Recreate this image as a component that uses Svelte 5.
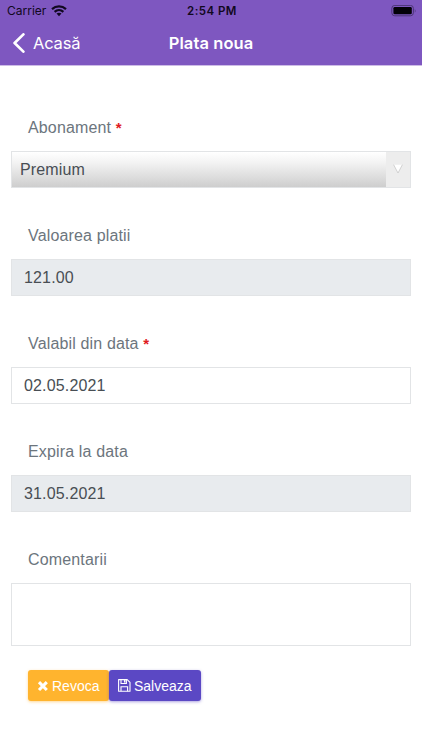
<script>
  let plan = $state('Premium');
  let startDate = $state('02.05.2021');
  let comments = $state('');
</script>

<div class="screen">
  <header>
    <div class="status">
      <div class="network">
        <span class="carrier">Carrier</span>
        <svg width="16" height="12" viewBox="0 0 16 12" aria-hidden="true">
          <path d="M1 4.1C5 .5 11 .5 15 4.1M3.6 6.8C6.2 4.6 9.8 4.6 12.4 6.8" fill="none" stroke="currentColor" stroke-width="2.2" />
          <path d="M8 11.2 5.5 8.6Q8 6.7 10.5 8.6Z" fill="currentColor" />
        </svg>
      </div>
      <span class="time">2:54 PM</span>
      <svg class="battery" width="26" height="12" viewBox="0 0 26 12" aria-hidden="true">
        <rect x="0.8" y="0.4" width="21.6" height="10.4" rx="3" fill="none" stroke="#4c3575" />
        <rect x="2.4" y="1.9" width="18.4" height="7.4" rx="1.4" fill="#030108" />
        <path d="M23.8 3.8q1.5 2 0 4z" fill="#4c3575" />
      </svg>
    </div>
    <nav>
      <button class="back" type="button">
        <svg width="13" height="20" viewBox="0 0 13 20" aria-hidden="true">
          <path d="M11.4 1.4 2.6 10l8.8 8.6" fill="none" stroke="currentColor" stroke-width="2.7" stroke-linecap="round" stroke-linejoin="round" />
        </svg>
        <span>Acasă</span>
      </button>
      <h1>Plata noua</h1>
    </nav>
  </header>

  <form>
    <div class="group">
      <label for="plan">Abonament <i>*</i></label>
      <button id="plan" class="control select" type="button">
        <span class="value">{plan}</span>
        <span class="arrow">
          <svg width="10" height="10" viewBox="0 0 10 10" aria-hidden="true">
            <path d="M.6.7h8.8L5 9z" fill="#fff" />
            <path d="M.6.7 5 9 9.4.7" fill="none" stroke="#c8c8c8" stroke-width=".8" />
          </svg>
        </span>
      </button>
    </div>
    <div class="group">
      <label for="amount">Valoarea platii</label>
      <input id="amount" class="control" value="121.00" readonly />
    </div>
    <div class="group">
      <label for="start">Valabil din data <i>*</i></label>
      <input id="start" class="control" bind:value={startDate} />
    </div>
    <div class="group">
      <label for="end">Expira la data</label>
      <input id="end" class="control" value="31.05.2021" readonly />
    </div>
    <div class="group last">
      <label for="comments">Comentarii</label>
      <textarea id="comments" class="control" bind:value={comments}></textarea>
    </div>
    <div class="actions">
      <button class="cancel" type="button">
        <svg width="12" height="12" viewBox="0 0 12 12" aria-hidden="true">
          <path d="m2 2.2 7.8 7.8m0-7.8L2 10" stroke="currentColor" stroke-width="3.1" />
        </svg>
        <span>Revoca</span>
      </button>
      <button class="save" type="button">
        <svg width="13" height="13" viewBox="0 0 13 13" fill="none" stroke="currentColor" stroke-width="1.1" aria-hidden="true">
          <path d="M.6.6h8.6l2.8 2.8v8.8H.6z" stroke-linejoin="round" />
          <path d="M3 .8v3.7h5.4V.8M3 12.2V7.7h6.6v4.5" />
          <path d="M6.7 1v2.6" stroke-width="1.5" />
        </svg>
        <span>Salveaza</span>
      </button>
    </div>
  </form>
</div>

<style>
  :global(body) {
    margin: 0;
    background: #fff;
  }
  .screen {
    width: 422px;
    height: 750px;
    overflow: hidden;
    background: #fff;
    font-family: "Liberation Sans", Arial, sans-serif;
  }
  button {
    margin: 0;
    padding: 0;
    border: 0;
    background: none;
    font: inherit;
    color: inherit;
  }
  header {
    height: 65px;
    background: #7e57c0;
    border-bottom: 1px solid #cdbce6;
    font-family: Inter, "Liberation Sans", sans-serif;
  }
  .status {
    display: grid;
    grid-template-columns: 1fr auto 1fr;
    align-items: center;
    height: 22px;
    padding: 0 5px 0 7px;
    color: #110820;
    font-size: 12px;
  }
  .network {
    display: flex;
    align-items: center;
    gap: 5px;
    line-height: 14px;
    padding-bottom: 1px;
  }
  .time {
    font-size: 11.5px;
    font-weight: 600;
    letter-spacing: 0.45px;
  }
  .battery {
    justify-self: end;
  }
  nav {
    display: grid;
    grid-template-columns: 1fr auto 1fr;
    align-items: center;
    height: 42px;
    color: #fff;
  }
  .back {
    display: flex;
    align-items: center;
    gap: 8px;
    padding-left: 12px;
    font-size: 16.5px;
    letter-spacing: -0.2px;
  }
  h1 {
    margin: 0;
    font-size: 16.5px;
    font-weight: 600;
    letter-spacing: 0.1px;
  }
  form {
    padding: 50px 11px 0;
  }
  .group {
    display: flex;
    flex-direction: column;
    height: 108px;
  }
  .group.last {
    height: 122px;
  }
  label {
    height: 35px;
    padding-left: 17px;
    line-height: 24px;
    font-size: 16px;
    letter-spacing: 0.15px;
    color: #6c757d;
  }
  label i {
    font-size: 15px;
    font-style: normal;
    font-weight: 700;
    color: #e01b22;
  }
  .control {
    box-sizing: border-box;
    width: 400px;
    height: 37px;
    margin: 0;
    padding: 1px 12px 0;
    border: 1px solid #e2e4e6;
    border-radius: 0;
    outline: 0;
    background: #fff;
    font-family: inherit;
    font-size: 16px;
    letter-spacing: 0.15px;
    color: #484e54;
  }
  .control[readonly] {
    background: #e8ebee;
  }
  textarea.control {
    height: 63px;
    resize: none;
  }
  .control.select {
    display: flex;
    padding: 0;
    text-align: left;
    background: linear-gradient(#fff 0%, #f3f3f3 30%, #cecece 100%);
  }
  .value {
    flex: 1;
    align-self: center;
    padding: 1px 0 0 8px;
  }
  .arrow {
    display: flex;
    justify-content: center;
    align-self: stretch;
    box-sizing: border-box;
    width: 24px;
    padding-top: 12px;
    background: #ededed;
  }
  .actions {
    display: flex;
    padding-left: 17px;
  }
  .actions button {
    display: flex;
    box-sizing: border-box;
    align-items: center;
    gap: 3px;
    height: 31px;
    padding-left: 9px;
    border-radius: 3px;
    color: #fff;
    font-size: 14px;
  }
  .actions .cancel {
    width: 81px;
    background: #ffb42e;
    box-shadow: 0 1px 3px #ffb42e80;
  }
  .actions .save {
    width: 92px;
    background: #5b48c4;
    box-shadow: 0 1px 3px #5b48c480;
  }
</style>
